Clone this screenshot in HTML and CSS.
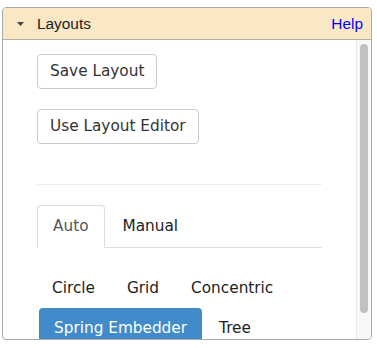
FILE: index.html
```html
<!DOCTYPE html>
<html>
<head>
<meta charset="utf-8">
<link rel="stylesheet" href="styles.css">
</head>
<body>
<div class="panel">
  <div class="panel-header">
    <svg class="caret" width="7" height="4" viewBox="0 0 7 4"><path d="M0 0H7L3.5 4Z" fill="#444"/></svg>
    <span class="title">Layouts</span>
    <a class="help">Help</a>
  </div>
  <div class="panel-body">
    <div class="content">
      <div class="actions">
        <button class="btn">Save Layout</button>
        <button class="btn">Use Layout Editor</button>
      </div>
      <div class="divider"></div>
      <div class="tabs">
        <a class="tab active">Auto</a>
        <a class="tab">Manual</a>
      </div>
      <div class="pills">
        <a class="pill">Circle</a>
        <a class="pill">Grid</a>
        <a class="pill">Concentric</a>
        <a class="pill active">Spring Embedder</a>
        <a class="pill">Tree</a>
      </div>
    </div>
    <div class="scrollbar"><div class="thumb"></div></div>
  </div>
</div>
</body>
</html>
```
FILE: styles.css
```css
html, body {
  margin: 0;
  padding: 0;
  background: #fff;
}
.panel {
  margin: 7px 0 0 2px;
  width: 368px;
  height: 331px;
  border: 1px solid #a9a9a9;
  border-radius: 4px;
  overflow: hidden;
  display: flex;
  flex-direction: column;
}
.panel-header {
  height: 31px;
  flex: none;
  border-bottom: 1px solid #b4b0a6;
  background: #f9e8c3;
  display: flex;
  align-items: center;
  padding: 0 8px 0 14px;
  font-family: "Liberation Sans", Arial, sans-serif;
  font-size: 15.4px;
}
.caret {
  margin-right: 13px;
  margin-top: 1px;
}
.title {
  color: #222;
  flex: 1;
}
.help {
  color: #0000ff;
  cursor: pointer;
}
.panel-body {
  flex: 1;
  display: flex;
  overflow: hidden;
  min-height: 0;
}
.content {
  flex: 1;
  min-width: 0;
  padding: 14px 34px 0 34px;
  font-family: "DejaVu Sans", Verdana, sans-serif;
  font-size: 15.3px;
  color: #333;
}
.actions {
  display: flex;
  flex-direction: column;
  align-items: flex-start;
  gap: 20px;
}
.btn {
  font-family: inherit;
  font-size: 15.3px;
  line-height: 21px;
  color: #333;
  background: #fff;
  border: 1px solid #ccc;
  border-radius: 4px;
  padding: 6px 12px;
  margin: 0;
}
.divider {
  margin-top: 40px;
  border-top: 1px solid #eee;
}
.tabs {
  margin-top: 20px;
  display: flex;
  border-bottom: 1px solid #ddd;
}
.tab {
  padding: 10px 15px;
  line-height: 21px;
  border: 1px solid transparent;
  border-radius: 4px 4px 0 0;
  margin-right: 2px;
  margin-bottom: -1px;
  color: #222;
}
.tab.active {
  border-color: #ddd #ddd transparent;
  background: #fff;
  color: #555;
}
.pills {
  margin-top: 20px;
  display: flex;
  flex-wrap: wrap;
}
.pill {
  padding: 10px 15px;
  line-height: 20px;
  border-radius: 4px;
  color: #222;
}
.pill + .pill {
  margin-left: 2px;
}
.pill.active {
  background: #428bca;
  color: #fff;
}
.scrollbar {
  flex: none;
  width: 8px;
  border-left: 1px solid #e8e8e8;
  background: #f8f8f8;
  padding: 4px 3px 0 3px;
}
.thumb {
  width: 8px;
  height: 269px;
  border-radius: 4px;
  background: #c1c1c1;
}
```
